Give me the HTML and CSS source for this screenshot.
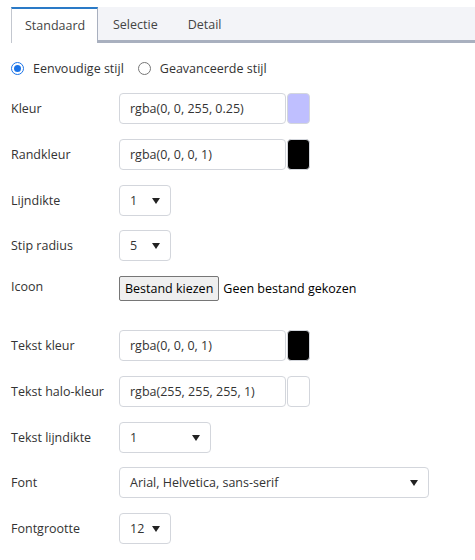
FILE: index.html
```html
<!DOCTYPE html>
<html lang="nl">
<head>
<meta charset="utf-8">
<link rel="stylesheet" href="styles.css">
</head>
<body>
<div class="panel">
  <div class="tabs">
    <div class="tab active">Standaard</div>
    <div class="tab">Selectie</div>
    <div class="tab">Detail</div>
  </div>

  <div class="mode">
    <label class="radio"><span class="dot checked"></span>Eenvoudige stijl</label>
    <label class="radio"><span class="dot"></span>Geavanceerde stijl</label>
  </div>

  <div class="row">
    <div class="label">Kleur</div>
    <div class="field">rgba(0, 0, 255, 0.25)</div>
    <div class="swatch swatch-blue"></div>
  </div>
  <div class="row">
    <div class="label">Randkleur</div>
    <div class="field">rgba(0, 0, 0, 1)</div>
    <div class="swatch swatch-black"></div>
  </div>
  <div class="row">
    <div class="label">Lijndikte</div>
    <div class="select select-sm"><span>1</span><span class="caret"></span></div>
  </div>
  <div class="row">
    <div class="label">Stip radius</div>
    <div class="select select-sm"><span>5</span><span class="caret"></span></div>
  </div>
  <div class="row row-file">
    <div class="label">Icoon</div>
    <div class="file-btn">Bestand kiezen</div>
    <div class="file-name">Geen bestand gekozen</div>
  </div>
  <div class="row">
    <div class="label">Tekst kleur</div>
    <div class="field">rgba(0, 0, 0, 1)</div>
    <div class="swatch swatch-black"></div>
  </div>
  <div class="row">
    <div class="label">Tekst halo-kleur</div>
    <div class="field">rgba(255, 255, 255, 1)</div>
    <div class="swatch swatch-white"></div>
  </div>
  <div class="row">
    <div class="label">Tekst lijndikte</div>
    <div class="select select-md"><span>1</span><span class="caret"></span></div>
  </div>
  <div class="row">
    <div class="label">Font</div>
    <div class="select select-lg"><span>Arial, Helvetica, sans-serif</span><span class="caret"></span></div>
  </div>
  <div class="row">
    <div class="label">Fontgrootte</div>
    <div class="select select-sm"><span>12</span><span class="caret"></span></div>
  </div>
</div>
</body>
</html>
```

FILE: styles.css
```css
html, body {
  margin: 0;
  padding: 0;
  background: #ffffff;
}

body {
  font-family: "Segoe UI", "Open Sans", "Noto Sans", sans-serif;
  font-size: 12.5px;
  color: #333333;
}

.panel {
  padding: 7px 0 0 11px;
}

.tabs {
  display: flex;
  height: 33px;
  background: #f3f4f8;
  border-bottom: 3px solid #a9b0bf;
}

.tab {
  display: flex;
  align-items: center;
  padding: 2px 15px 0;
  color: #444444;
}

.tab.active {
  width: 87px;
  box-sizing: border-box;
  padding: 0 13px 1px;
  height: 36px;
  background: #ffffff;
  border-top: 2px solid #2a7ac7;
  border-left: 1px solid #c3c7cf;
  border-right: 1px solid #a9b0bf;
}

.mode {
  display: flex;
  align-items: center;
  height: 24px;
  margin-top: 13px;
  margin-bottom: 13px;
}

.radio {
  display: flex;
  align-items: center;
  margin-right: 14px;
}

.dot {
  width: 11px;
  height: 11px;
  border: 1px solid #767676;
  border-radius: 50%;
  margin-right: 9px;
  box-sizing: content-box;
  position: relative;
}

.dot.checked {
  border-color: #1a73e8;
}

.dot.checked::after {
  content: "";
  position: absolute;
  left: 2px;
  top: 2px;
  width: 7px;
  height: 7px;
  border-radius: 50%;
  background: #1a73e8;
}

.row {
  display: flex;
  align-items: center;
  height: 31px;
  margin-bottom: 14.75px;
}

.label {
  width: 108px;
  flex: none;
}

.field {
  width: 167px;
  height: 31px;
  box-sizing: border-box;
  border: 1px solid #d3d6dc;
  border-radius: 4px;
  padding: 0 10px;
  display: flex;
  align-items: center;
  color: #333333;
}

.swatch {
  width: 23px;
  height: 31px;
  box-sizing: border-box;
  border: 1px solid #d3d6dc;
  border-radius: 4px;
  margin-left: 1px;
}

.swatch-blue { background: #bfbfff; }
.swatch-black { background: #000000; }
.swatch-white { background: #ffffff; }

.select {
  height: 31px;
  box-sizing: border-box;
  border: 1px solid #d3d6dc;
  border-radius: 4px;
  padding: 0 10px;
  display: flex;
  align-items: center;
  justify-content: space-between;
}

.select-sm { width: 52px; }
.select-md { width: 92px; }
.select-lg { width: 310px; }

.caret {
  width: 0;
  height: 0;
  border-left: 4px solid transparent;
  border-right: 4px solid transparent;
  border-top: 6px solid #222222;
  margin-top: 1px;
}

.row-file {
  height: 25px;
  align-items: flex-start;
  margin-bottom: 29px;
}

.row-file .label {
  line-height: 22px;
}

.file-btn {
  height: 25px;
  box-sizing: border-box;
  border: 1px solid #767676;
  border-radius: 2px;
  background: #efefef;
  color: #000000;
  padding: 0 5px;
  display: flex;
  align-items: center;
}

.file-name {
  margin-left: 4px;
  line-height: 25px;
  color: #000000;
}
```
